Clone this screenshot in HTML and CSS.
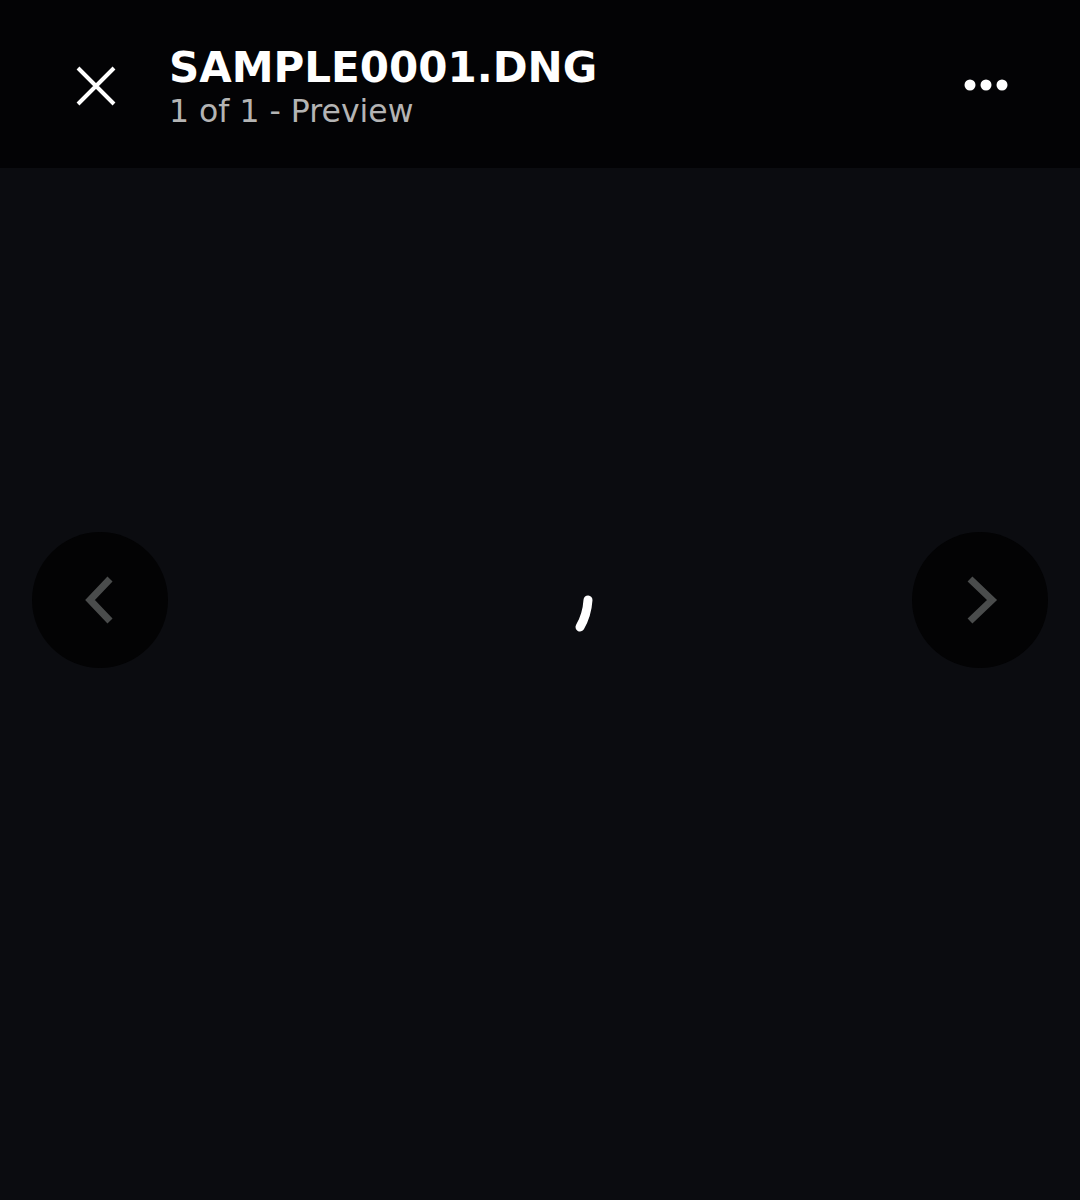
FILE: index.html
```html
<!DOCTYPE html>
<html>
<head>
<meta charset="utf-8">
<link rel="stylesheet" href="styles.css">
</head>
<body>
<div class="app">
  <header class="topbar">
    <button class="close" aria-label="Close">
      <svg width="40" height="40" viewBox="0 0 40 40"><path d="M2 2 L38 38 M38 2 L2 38" stroke="#fff" stroke-width="4" fill="none"/></svg>
    </button>
    <div class="titles">
      <div class="title">SAMPLE0001.DNG</div>
      <div class="subtitle">1 of 1 - Preview</div>
    </div>
    <button class="more" aria-label="More">
      <svg width="44" height="14" viewBox="0 0 44 14"><circle cx="6" cy="7" r="5.5" fill="#fff"/><circle cx="22" cy="7" r="5.5" fill="#fff"/><circle cx="38" cy="7" r="5.5" fill="#fff"/></svg>
    </button>
  </header>
  <main class="viewer">
    <button class="nav">
      <svg width="40" height="50" viewBox="0 0 40 50"><path d="M30 4 L10 25 L30 46" stroke="#4a4c4c" stroke-width="7" fill="none"/></svg>
    </button>
    <div class="spinner">
      <svg width="40" height="50" viewBox="0 0 40 50"><path d="M24 7 Q23 22 16 34" stroke="#fff" stroke-width="9" stroke-linecap="round" fill="none"/></svg>
    </div>
    <button class="nav">
      <svg width="40" height="50" viewBox="0 0 40 50"><path d="M10 4 L32 25 L10 46" stroke="#4a4c4c" stroke-width="7" fill="none"/></svg>
    </button>
  </main>
</div>
</body>
</html>
```
FILE: styles.css
```css
html, body {
  margin: 0;
  padding: 0;
  background: #0b0c10;
  font-family: "DejaVu Sans", sans-serif;
}
.app {
  width: 1080px;
  height: 1200px;
  display: flex;
  flex-direction: column;
}
button {
  background: none;
  border: 0;
  padding: 0;
  margin: 0;
  cursor: pointer;
}
.topbar {
  height: 168px;
  flex: none;
  background: #030305;
  display: flex;
  align-items: center;
  padding: 0 72px 0 76px;
}
.close {
  width: 40px;
  height: 40px;
  display: flex;
  margin-top: 3px;
}
.titles {
  margin-left: 53px;
  flex: 1;
  display: flex;
  flex-direction: column;
  margin-top: 6px;
}
.title {
  color: #fff;
  font-weight: bold;
  font-size: 42px;
  line-height: 46px;
}
.subtitle {
  color: #b4b4b4;
  font-size: 31.5px;
  line-height: 38px;
  margin-top: 1px;
}
.more {
  display: flex;
  margin-top: 2px;
}
.viewer {
  flex: 1;
  display: flex;
  align-items: center;
  justify-content: space-between;
  padding: 0 32px 168px;
}
.nav {
  width: 136px;
  height: 136px;
  border-radius: 50%;
  background: #030304;
  display: flex;
  align-items: center;
  justify-content: center;
}
.spinner {
  display: flex;
  margin-left: 88px;
  margin-top: 36px;
}
```
